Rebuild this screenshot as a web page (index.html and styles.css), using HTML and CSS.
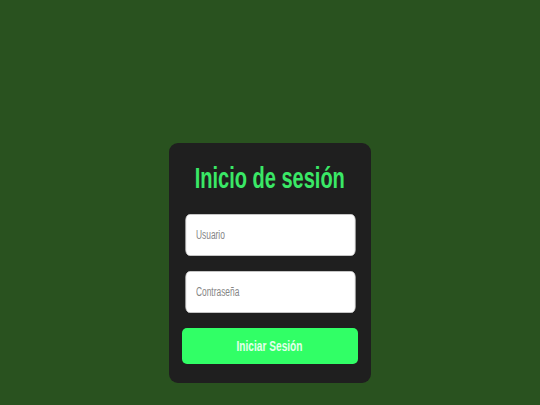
FILE: index.html
```html
<!DOCTYPE html>
<html lang="es">
<head>
    <meta charset="UTF-8">
    <meta name="viewport" content="width=device-width, initial-scale=1.0">
    <title>Inicio de sesión</title>
    <link rel="stylesheet" href="styles.css">
</head>
<body>
    <div id="login">
        <h1 class="title"><span class="narrow">Inicio de sesión</span></h1>
        <form id="login-form">
            <input class="field" type="text" placeholder="Usuario">
            <input class="field" type="password" placeholder="Contraseña">
            <button class="btn" type="submit"><span class="narrow">Iniciar Sesión</span></button>
        </form>
    </div>
</body>
</html>
```

FILE: styles.css
```css
body{
    margin: 0;
    background-color: #29521f;
    font-family: "Liberation Sans", Arial, sans-serif;
    display: flex;
    justify-content: center;
    padding-top: 143px;
}
#login{
    width: 202px;
    box-sizing: border-box;
    background-color: #1f1f1f;
    border-radius: 9px;
    padding: 17px 13px 19px 13px;
}
.narrow{
    display: inline-block;
    white-space: nowrap;
    transform: scaleX(0.7);
}
.title{
    margin: 0px;
    display: flex;
    justify-content: center;
    color: #3ae866;
    font-size: 29px;
    font-weight: bold;
    line-height: 36px;
}
.title .narrow{
    transform: scaleX(0.69);
}
#login-form{
    display: flex;
    flex-direction: column;
    align-items: center;
    margin-top: 18px;
    gap: 15px;
}
.field{
    flex-shrink: 0;
    width: 243px;
    height: 42px;
    box-sizing: border-box;
    border: 1px solid #cfcfcf;
    border-radius: 6px;
    padding: 0px 14px;
    font-family: inherit;
    font-size: 12px;
    background-color: white;
    outline: none;
    transform: scaleX(0.7);
}
.field::placeholder{
    color: #858585;
}
.btn{
    width: 176px;
    height: 36px;
    border: 0px;
    border-radius: 5px;
    background-color: #31ff66;
    color: #e4ffec;
    font-family: inherit;
    font-size: 14px;
    font-weight: bold;
    cursor: pointer;
}
.btn .narrow{
    transform: scaleX(0.725);
}
```
